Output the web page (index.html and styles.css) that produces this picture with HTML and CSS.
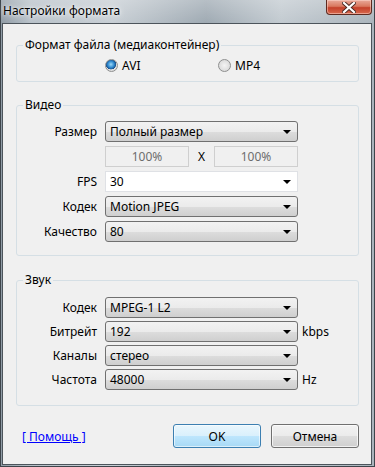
FILE: index.html
```html
<!DOCTYPE html>
<html lang="ru">
<head>
    <meta charset="UTF-8">
    <title>Настройки формата</title>
    <link rel="stylesheet" href="styles.css">
</head>
<body>

    <div class="window">

        <!-- Title bar -->
        <div class="titlebar">
            <span class="title">Настройки формата</span>
            <div class="close">
                <svg width="14" height="11" viewBox="0 0 14 11">
                    <path d="M2 1 L12 10 M12 1 L2 10" stroke="#4a2a24" stroke-width="4" stroke-linecap="square"/>
                    <path d="M2 1 L12 10 M12 1 L2 10" stroke="#ffffff" stroke-width="2.2" stroke-linecap="square"/>
                </svg>
            </div>
        </div>

        <div class="client">

            <!-- Container format -->
            <fieldset class="group group-format">
                <legend>Формат файла (медиаконтейнер)</legend>
                <div class="radios">
                    <label class="radio"><span class="dot checked"></span>AVI</label>
                    <label class="radio"><span class="dot"></span>MP4</label>
                </div>
            </fieldset>

            <!-- Video -->
            <fieldset class="group group-video">
                <legend>Видео</legend>
                <div class="form video-form">
                    <span class="label">Размер</span>
                    <div class="combo"><span>Полный размер</span><i class="arrow"></i></div>
                    <span></span>

                    <span class="label"></span>
                    <div class="size-row">
                        <span class="field disabled">100%</span>
                        <span class="times">X</span>
                        <span class="field disabled">100%</span>
                    </div>
                    <span></span>

                    <span class="label">FPS</span>
                    <div class="combo editable"><span>30</span><i class="arrow"></i></div>
                    <span></span>

                    <span class="label">Кодек</span>
                    <div class="combo"><span>Motion JPEG</span><i class="arrow"></i></div>
                    <span></span>

                    <span class="label">Качество</span>
                    <div class="combo"><span>80</span><i class="arrow"></i></div>
                    <span></span>
                </div>
            </fieldset>

            <!-- Audio -->
            <fieldset class="group group-audio">
                <legend>Звук</legend>
                <div class="form audio-form">
                    <span class="label">Кодек</span>
                    <div class="combo"><span>MPEG-1 L2</span><i class="arrow"></i></div>
                    <span></span>

                    <span class="label">Битрейт</span>
                    <div class="combo"><span>192</span><i class="arrow"></i></div>
                    <span class="unit">kbps</span>

                    <span class="label">Каналы</span>
                    <div class="combo"><span>стерео</span><i class="arrow"></i></div>
                    <span></span>

                    <span class="label">Частота</span>
                    <div class="combo"><span>48000</span><i class="arrow"></i></div>
                    <span class="unit">Hz</span>
                </div>
            </fieldset>

            <!-- Footer -->
            <div class="footer">
                <a href="#" class="help">[ Помощь ]</a>
                <button class="btn btn-default">OK</button>
                <button class="btn">Отмена</button>
            </div>

        </div>
    </div>

</body>
</html>
```

FILE: styles.css
```css
/* Page */
body {
    margin: 0;
    width: 375px;
    height: 467px;
    overflow: hidden;
    font-family: "Noto Sans", "Open Sans", sans-serif;
    font-size: 12px;
    color: #000;
}

/* Aero frame */
.window {
    height: 467px;
    box-sizing: border-box;
    padding: 0 3px 2px 2px;
    display: flex;
    flex-direction: column;
    background:
        linear-gradient(to bottom, rgba(255, 255, 255, 0.25), rgba(255, 255, 255, 0) 24px),
        linear-gradient(to right, #8e9aa4 0%, #b7c0c8 8%, #c7ced4 30%, #9ea9b2 55%, #c2cad0 75%, #a9b3bb 100%);
    box-shadow: inset 1px 0 0 #3e454b, inset -1px 0 0 #3e454b, inset 0 -1px 0 #3e454b;
}

.titlebar {
    height: 23px;
    display: flex;
    align-items: flex-start;
}

.title {
    padding: 3px 0 0 1px;
    line-height: 15px;
    font-size: 12px;
    text-shadow: 0 0 6px rgba(255, 255, 255, 0.95), 0 0 3px rgba(255, 255, 255, 0.8);
}

.close {
    margin-left: auto;
    width: 44px;
    height: 14px;
    border: 1px solid #5e2a20;
    border-top: none;
    border-radius: 0 0 4px 4px;
    background: linear-gradient(to bottom, #e9a99a 0%, #d9785f 45%, #c4402a 55%, #d86a4f 100%);
    box-shadow: inset 0 0 0 1px rgba(255, 220, 210, 0.5);
    display: flex;
    justify-content: center;
    align-items: center;
}

/* Client area */
.client {
    flex: 1;
    background-color: #f0f0f0;
    border: 1px solid #4c545b;
}

/* Group boxes */
.group {
    margin: 0 12px 0 13px;
    padding: 0;
    min-inline-size: 0;
    border: 1px solid #d5dfe5;
    border-radius: 3px;
}

.group legend {
    margin-left: 6px;
    padding: 0 2px;
    line-height: 16px;
}

.group-format {
    margin-top: 13px;
    padding: 4px 0 8px 0;
}

.group-video {
    margin-top: 15px;
    padding: 8px 0 13px 0;
}

.group-audio {
    margin-top: 16px;
    padding: 9px 0 15px 0;
}

/* Radio buttons */
.radios {
    display: flex;
    height: 16px;
    align-items: center;
    padding-left: 88px;
}

.radio {
    display: flex;
    align-items: center;
    width: 113px;
}

.dot {
    width: 11px;
    height: 11px;
    margin-right: 4px;
    border: 1px solid #8e8f8f;
    border-radius: 50%;
    background: radial-gradient(circle at 50% 50%, #f4f4f4 0%, #dcdcdc 70%, #c8c8c8 100%);
}

.dot.checked {
    background:
        radial-gradient(circle at 45% 40%, #9fd8f6 0%, #2f8ad0 35%, #1a4f8a 55%, transparent 58%),
        radial-gradient(circle at 50% 50%, #f4f4f4 0%, #dcdcdc 70%, #c8c8c8 100%);
}

/* Form grids */
.form {
    display: grid;
    grid-template-columns: 88px 193px auto;
    align-items: center;
}

.video-form {
    row-gap: 4px;
}

.audio-form {
    row-gap: 3px;
}

.label {
    text-align: right;
    padding-right: 8px;
}

.unit {
    padding-left: 4px;
}

/* Combo boxes */
.combo {
    height: 21px;
    box-sizing: border-box;
    border: 1px solid #707070;
    border-radius: 3px;
    background: linear-gradient(to bottom, #f2f2f2 0%, #ebebeb 50%, #dddddd 51%, #cfcfcf 100%);
    display: flex;
    align-items: center;
    padding: 0 5px 0 4px;
}

.combo span {
    flex: 1;
}

.combo.editable {
    background: #fff;
    border-color: #dfe1e5;
    border-radius: 0;
}

.arrow {
    width: 0;
    height: 0;
    border-left: 4px solid transparent;
    border-right: 4px solid transparent;
    border-top: 4px solid #000;
    margin-right: 1px;
}

.size-row {
    display: flex;
    align-items: center;
}

.field {
    width: 84px;
    height: 21px;
    box-sizing: border-box;
    border: 1px solid #cfcfcf;
    line-height: 19px;
    text-align: center;
}

.field.disabled {
    color: #6d6d6d;
    background-color: #f0f0f0;
}

.times {
    flex: 1;
    text-align: center;
}

/* Footer */
.footer {
    margin-top: 18px;
    padding: 0 12px 0 19px;
    display: flex;
    align-items: center;
    gap: 10px;
}

.help {
    color: #0000ff;
    margin-right: auto;
}

.btn {
    width: 88px;
    height: 24px;
    font-family: inherit;
    font-size: 12px;
    color: #000;
    border: 1px solid #707070;
    border-radius: 3px;
    background: linear-gradient(to bottom, #f2f2f2 0%, #ebebeb 50%, #dddddd 51%, #cfcfcf 100%);
    box-shadow: inset 0 0 0 1px rgba(255, 255, 255, 0.7);
    padding: 0;
}

.btn-default {
    border-color: #3c7fb1;
    background: linear-gradient(to bottom, #eaf6fd 0%, #d9f0fc 50%, #bee6fd 51%, #a7d9f5 100%);
    box-shadow: inset 0 0 0 1px rgba(255, 255, 255, 0.6);
}
```
